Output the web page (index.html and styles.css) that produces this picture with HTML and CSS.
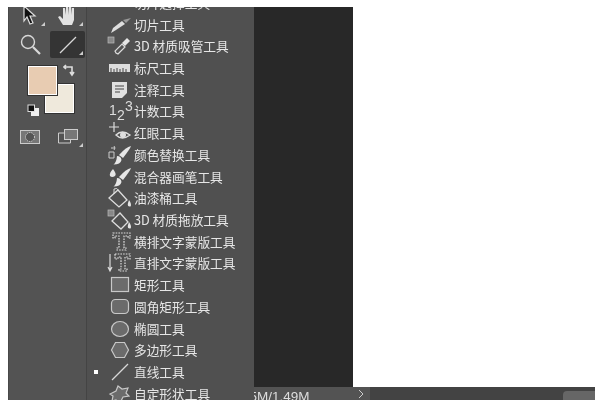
FILE: index.html
```html
<!DOCTYPE html>
<html lang="zh-CN">
<head>
    <meta charset="UTF-8">
    <title>直线工具</title>
    <link rel="stylesheet" href="styles.css">
</head>
<body>
    <div class="window">
        <aside class="toolbar">
            <div class="tool-grid">
                <div class="tool corner">
                    <svg width="24" height="24" viewBox="0 0 24 24"><path d="M6 2l11 10h-5l3 7-3 1-3-7-3 4z" fill="#111" stroke="#ddd" stroke-width="1.2"/></svg>
                </div>
                <div class="tool corner">
                    <svg width="24" height="26" viewBox="0 0 24 26"><path d="M7 22l-5-8 2-1 3 3V5h2l1 7V2h2l1 10V3h2l1 9V5h2v12l-2 5z" fill="#e2e2e2"/></svg>
                </div>
            </div>
            <div class="tool-grid">
                <div class="tool">
                    <svg width="24" height="24" viewBox="0 0 24 24"><circle cx="10" cy="9" r="6.500" fill="none" stroke="#d8d8d8" stroke-width="1.400"/><path d="M15 14l7 7" stroke="#d8d8d8" stroke-width="2.200"/></svg>
                </div>
                <div class="tool active corner">
                    <svg width="24" height="24" viewBox="0 0 24 24"><path d="M4 20L20 4" stroke="#d8d8d8" stroke-width="1.200"/></svg>
                </div>
            </div>
            <div class="colors">
                <div class="swatch bg-color"></div>
                <div class="swatch fg-color"></div>
                <svg class="swap" width="14" height="14" viewBox="0 0 14 14"><path d="M1 3h8v7M7 8l2 3 2-3M3 1L1 3l2 2" fill="none" stroke="#ddd" stroke-width="1.600"/></svg>
                <svg class="defaults" width="12" height="12" viewBox="0 0 12 12"><rect x="4" y="4" width="8" height="8" fill="#eee"/><rect x="1" y="1" width="6.500" height="6.500" fill="#111" stroke="#ddd"/></svg>
            </div>
            <div class="tool-grid">
                <div class="tool">
                    <svg width="22" height="18" viewBox="0 0 22 18"><rect x="1.500" y="2.500" width="19" height="13" fill="#777" stroke="#ccc"/><circle cx="11" cy="9" r="4.500" fill="#555" stroke="#ddd" stroke-dasharray="1.200 1"/></svg>
                </div>
                <div class="tool corner">
                    <svg width="22" height="18" viewBox="0 0 22 18"><rect x="7.500" y="1.500" width="13" height="10" fill="#777" stroke="#ccc"/><path d="M7 5H1.500v10h12v-3" fill="none" stroke="#ccc"/></svg>
                </div>
            </div>
        </aside>

        <nav class="flyout">
            <ul class="tool-list">
                <li><span class="mark"></span><span class="icon"></span><span class="label">切片选择工具</span></li>
                <li><span class="mark"></span><span class="icon">
                    <svg width="28" height="22" viewBox="0 0 28 22"><path d="M6 19l2-5 9-7 3 3-9 6z" fill="#ddd"/><path d="M18 6l8-2-5 5z" fill="#999"/></svg>
                </span><span class="label">切片工具</span></li>
                <li><span class="mark"></span><span class="icon">
                    <svg width="28" height="22" viewBox="0 0 28 22"><rect x="3" y="2" width="6" height="6" fill="#888" stroke="#bbb" stroke-width=".7"/><path d="M11 18l-1-2 7-7 3 3-7 7z" fill="#555" stroke="#ddd" stroke-width="1.200"/><path d="M17 8l5-5 3 3-5 5z" fill="#e6e6e6"/></svg>
                </span><span class="label">3D 材质吸管工具</span></li>
                <li><span class="mark"></span><span class="icon">
                    <svg width="28" height="22" viewBox="0 0 28 22"><rect x="4" y="7" width="21" height="8" fill="#ddd"/><path d="M6 11v4M9 12v3M12 11v4M15 12v3M18 11v4M21 12v3" stroke="#444"/></svg>
                </span><span class="label">标尺工具</span></li>
                <li><span class="mark"></span><span class="icon">
                    <svg width="28" height="22" viewBox="0 0 28 22"><path d="M7 3h15v11l-5 5H7z" fill="#e0e0e0"/><path d="M10 7h9M10 10h9M10 13h5" stroke="#444" stroke-width="1.200"/></svg>
                </span><span class="label">注释工具</span></li>
                <li><span class="mark"></span><span class="icon">
                    <svg width="28" height="22" viewBox="0 0 28 22"><text class="count" x="4" y="15">1</text><text class="count" x="12" y="20">2</text><text class="count" x="20" y="11">3</text></svg>
                </span><span class="label">计数工具</span></li>
                <li><span class="mark"></span><span class="icon">
                    <svg width="28" height="22" viewBox="0 0 28 22"><path d="M4 5h10M9 0v10" stroke="#ddd" stroke-width="1.200"/><path d="M11 13q6-6 14 0-8 6-14 0z" fill="none" stroke="#ddd" stroke-width="1.400"/><circle cx="18" cy="13" r="3" fill="#ddd"/></svg>
                </span><span class="label">红眼工具</span></li>
                <li><span class="mark"></span><span class="icon">
                    <svg width="28" height="22" viewBox="0 0 28 22"><path d="M4 8h5v6H4zM6 4h4l-1-2M10 4l-1 2" fill="none" stroke="#ccc"/><path d="M26 2q-1 3-8 12l-4-3q7-8 12-9z" fill="#e6e6e6"/><path d="M12 12q4 0 4.500 4-1 4.500-8 4.500 3-2 3.500-8.500z" fill="#e6e6e6"/></svg>
                </span><span class="label">颜色替换工具</span></li>
                <li><span class="mark"></span><span class="icon">
                    <svg width="28" height="22" viewBox="0 0 28 22"><path d="M8 3q4 5 2 7-3 2-5 0-1-3 3-7z" fill="#e6e6e6"/><path d="M26 2q-1 3-8 12l-4-3q7-8 12-9z" fill="#e6e6e6"/><path d="M12 12q4 0 4.500 4-1 4.500-8 4.500 3-2 3.500-8.500z" fill="#e6e6e6"/></svg>
                </span><span class="label">混合器画笔工具</span></li>
                <li><span class="mark"></span><span class="icon">
                    <svg width="28" height="22" viewBox="0 0 28 22"><path d="M4 11l9-8 9 10-8 7z" fill="none" stroke="#ddd" stroke-width="1.300"/><path d="M9 7V2q3-2 5 2" fill="none" stroke="#ddd"/><path d="M24 13q3 4 1.500 6.500-3.500.5-2.500-3.500z" fill="#e6e6e6"/></svg>
                </span><span class="label">油漆桶工具</span></li>
                <li><span class="mark"></span><span class="icon">
                    <svg width="28" height="22" viewBox="0 0 28 22"><rect x="3" y="1" width="6" height="6" fill="#888" stroke="#bbb" stroke-width=".7"/><path d="M7 12l8-8 8 9-7 7z" fill="none" stroke="#ddd" stroke-width="1.300"/><path d="M24 13q3 4 1.500 6.500-3.500.5-2.500-3.500z" fill="#e6e6e6"/></svg>
                </span><span class="label">3D 材质拖放工具</span></li>
                <li><span class="mark"></span><span class="icon">
                    <svg width="28" height="22" viewBox="0 0 28 22"><path class="mask" d="M8 2h17v5h-2V5h-4v12h2v2h-9v-2h2V5h-4v2H8z"/></svg>
                </span><span class="label">横排文字蒙版工具</span></li>
                <li><span class="mark"></span><span class="icon">
                    <svg width="28" height="22" viewBox="0 0 28 22"><path d="M5 2v17M3 15l2 4 2-4" fill="none" stroke="#ddd" stroke-width="1.200"/><path class="mask" d="M10 2h15v5h-2V5h-3v12h2v2h-8v-2h2V5h-3v2h-3z"/></svg>
                </span><span class="label">直排文字蒙版工具</span></li>
                <li><span class="mark"></span><span class="icon">
                    <svg width="28" height="22" viewBox="0 0 28 22"><rect class="shape" x="6.500" y="3.500" width="17" height="14"/></svg>
                </span><span class="label">矩形工具</span></li>
                <li><span class="mark"></span><span class="icon">
                    <svg width="28" height="22" viewBox="0 0 28 22"><rect class="shape" x="6.500" y="3.500" width="17" height="14" rx="4"/></svg>
                </span><span class="label">圆角矩形工具</span></li>
                <li><span class="mark"></span><span class="icon">
                    <svg width="28" height="22" viewBox="0 0 28 22"><ellipse class="shape" cx="15" cy="11" rx="8.500" ry="7.500"/></svg>
                </span><span class="label">椭圆工具</span></li>
                <li><span class="mark"></span><span class="icon">
                    <svg width="28" height="22" viewBox="0 0 28 22"><path class="shape" d="M6.500 11l4-7.500h9l4 7.500-4 7.500h-9z"/></svg>
                </span><span class="label">多边形工具</span></li>
                <li><span class="mark"><i class="dot"></i></span><span class="icon">
                    <svg width="28" height="22" viewBox="0 0 28 22"><path d="M7 19L23 3" stroke="#d8d8d8" stroke-width="1.200"/></svg>
                </span><span class="label">直线工具</span></li>
                <li><span class="mark"></span><span class="icon">
                    <svg width="28" height="22" viewBox="0 0 28 22"><path class="shape" d="M13 3l4 3 6-1-2 5 3 3-6 1-3 6-4-3-4 1 1-5-3-2 6-3z"/></svg>
                </span><span class="label">自定形状工具</span></li>
            </ul>
        </nav>

        <main class="workspace">
            <div class="canvas-area">
                <div class="pasteboard"></div>
                <div class="canvas"></div>
            </div>
            <div class="statusbar">
                <div class="doc-info">
                    <span class="doc-size">文档:1.45M/1.49M</span>
                    <svg class="chevron" width="6" height="8" viewBox="0 0 6 8"><path d="M1 0l4 4-4 4" fill="none" stroke="#ccc"/></svg>
                </div>
                <div class="scroll-track"><div class="scroll-thumb"></div></div>
            </div>
        </main>
    </div>
</body>
</html>
```

FILE: styles.css
```css
html, body {
    height: 100%;
}

body {
    margin: 0;
    padding: 7px 5px 5px 8px;
    box-sizing: border-box;
    background-color: #fff;
    font-family: "Noto Sans CJK SC", "Liberation Sans", sans-serif;
    overflow: hidden;
}

.window {
    display: flex;
    height: 393px;
    overflow: hidden;
    filter: blur(0.35px);
}

/* left tool strip */
.toolbar {
    width: 79px;
    flex: none;
    box-sizing: border-box;
    padding-left: 3px;
    margin-top: -5px;
    background-color: #535353;
    border-left: 1px solid #484848;
    border-right: 1px solid #444;
}

.tool-grid {
    display: grid;
    grid-template-columns: 35px 35px;
    gap: 3px;
    margin-bottom: 2px;
}

.tool {
    position: relative;
    height: 27px;
    display: flex;
    align-items: center;
    justify-content: center;
    border-radius: 2px;
}

.tool.active {
    background-color: #343434;
}

.tool.corner::after {
    content: "";
    position: absolute;
    right: 2px;
    bottom: 3px;
    border-left: 4px solid transparent;
    border-bottom: 4px solid #ccc;
}

.colors {
    position: relative;
    height: 59px;
    margin-top: 6px;
}

.swatch {
    position: absolute;
    box-sizing: border-box;
    width: 29px;
    height: 29px;
    border: 1px solid #fff;
    outline: 1px solid #333;
}

.fg-color {
    left: 16px;
    top: 2px;
    background-color: #e8ccb2;
}

.bg-color {
    left: 33px;
    top: 20px;
    background-color: #efe9dc;
}

.swap {
    position: absolute;
    left: 51px;
    top: 0;
}

.defaults {
    position: absolute;
    left: 15px;
    top: 40px;
}

/* dropdown list of tools */
.flyout {
    width: 167px;
    flex: none;
    position: relative;
    z-index: 1;
    background-color: #505050;
    overflow: hidden;
}

.tool-list {
    list-style: none;
    margin: -15px 0 0;
    padding: 0;
}

.tool-list li {
    height: 21.72px;
    display: flex;
    align-items: center;
}

.mark {
    width: 18px;
    flex: none;
    display: flex;
    justify-content: center;
}

.dot {
    width: 4px;
    height: 4px;
    background-color: #fff;
}

.icon {
    width: 28px;
    height: 22px;
    flex: none;
}

.icon svg {
    display: block;
}

.label {
    margin-left: 1px;
    font-size: 12.7px;
    line-height: 16px;
    color: #e6e6e6;
    white-space: nowrap;
}

.count {
    font-family: "Liberation Sans", sans-serif;
    font-size: 14px;
    fill: #ddd;
}

.shape {
    fill: #6b6b6b;
    stroke: #c8c8c8;
    stroke-width: 1.2;
}

.mask {
    fill: none;
    stroke: #ddd;
    stroke-width: 1.2;
    stroke-dasharray: 1.6 1.1;
}

/* document area */
.workspace {
    flex: 1;
    min-width: 0;
    display: flex;
    flex-direction: column;
}

.canvas-area {
    flex: 1;
    display: flex;
}

.pasteboard {
    width: 99px;
    background-color: #282828;
}

.canvas {
    flex: 1;
    background-color: #fff;
}

.statusbar {
    height: 13px;
    display: flex;
    background-color: #4a4a4a;
}

.doc-info {
    width: 116px;
    flex: none;
    display: flex;
    align-items: center;
    justify-content: space-between;
    box-sizing: border-box;
    padding-right: 6px;
    background-color: #535353;
    overflow: hidden;
}

.doc-size {
    margin-left: -53px;
    margin-top: 3px;
    font-family: "Liberation Sans", sans-serif;
    font-size: 13.5px;
    color: #ddd;
    white-space: nowrap;
}

.scroll-track {
    flex: 1;
    display: flex;
    justify-content: flex-end;
    align-items: flex-end;
    background-color: #434343;
}

.scroll-thumb {
    width: 32px;
    height: 9px;
    border-radius: 4px 0 0 0;
    background-color: #666;
}
```
